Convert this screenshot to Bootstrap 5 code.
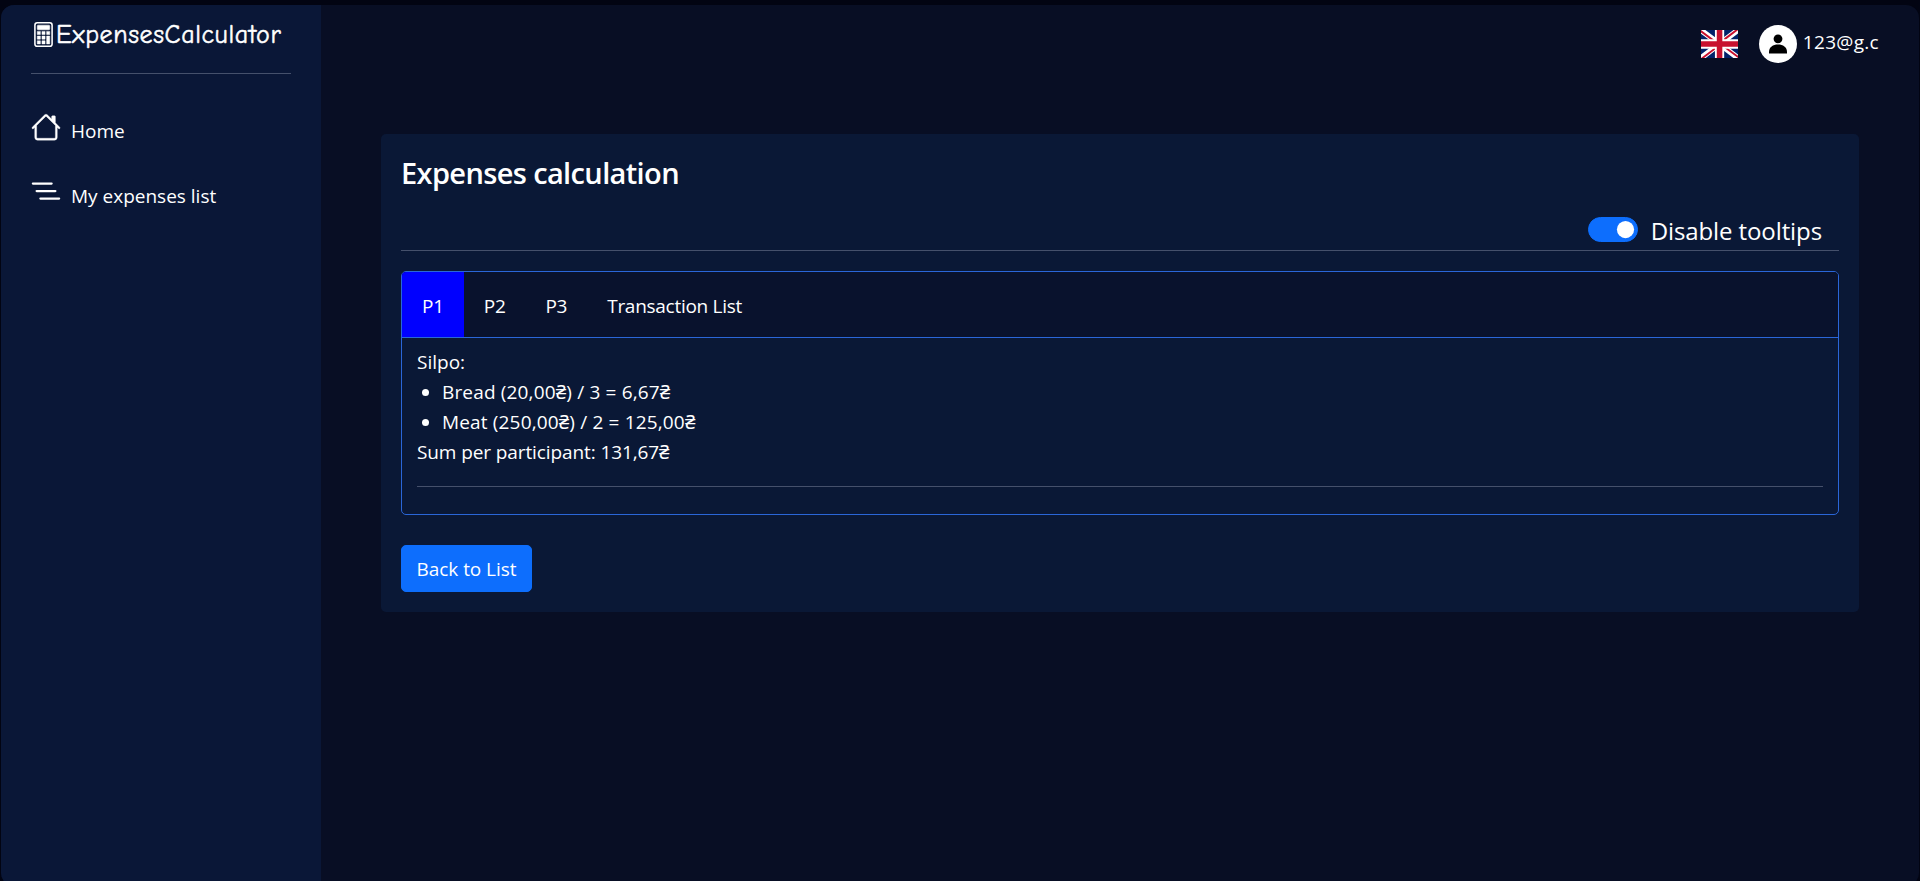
<!DOCTYPE html>
<html lang="en">
<head>
<meta charset="utf-8">
<meta name="viewport" content="width=device-width, initial-scale=1">
<title>ExpensesCalculator</title>
<link href="https://cdn.jsdelivr.net/npm/bootstrap@5.3.0/dist/css/bootstrap.min.css" rel="stylesheet">
<style>
html { font-size: 20px; }
body { background: #020412; color: #fff; font-family: "Open Sans", "Noto Sans", sans-serif; font-size: 19px; line-height: 30px; height: 881px; overflow: hidden; padding: 5px 1px 0; }
.shell { height: 881px; border-radius: 13px; background: #080e24; overflow: hidden; }
.side { width: 320px; background: #0a1737; padding: 9px 30px 0; }
.brand { font-family: "Comic Sans MS", "Comic Neue", Lato, sans-serif; font-size: 26px; letter-spacing: .6px; height: 40px; -webkit-text-stroke: .5px #fff; }
.brand span { padding-top: 2px; }
.rule { margin: 0; height: 1px; border: 0; background: #45506b; opacity: 1; }
.side-rule { margin-top: 19px; }
.side-menu { padding-top: 38px; }
.side-link { height: 65px; gap: 10px; color: #fff; text-decoration: none; }
.side-link span { padding-top: 4px; }
.topbar { height: 58px; padding: 20px 40px 0 0; }
.topbar .flag { margin: 5px 21px 0 0; }
.topbar .account { margin: 2px 0 0 6px; letter-spacing: .3px; }
.panel { background: #0a1836; border-radius: 5px; margin: 71px 60px 0; padding: 20px; height: 478px; }
.title { font-size: 29px; line-height: 38px; height: 40px; font-weight: 600; letter-spacing: -.63px; }
.form-switch { min-height: 0; padding: 23px 17px 0 0; height: 56px; gap: 13px; }
.form-switch .form-check-input { margin: 0; width: 50px; height: 25px; }
.big-label { font-size: 24px; line-height: 28px; letter-spacing: -.1px; }
.tabs-box { border: 1px solid #2a66d8; border-radius: 5px; height: 244px; margin-top: 20px; overflow: hidden; }
.tabs-head { background: #09122d; border-bottom: 1px solid #2a66d8; height: 66px; }
.tabs-head .nav-link { color: #fff; border-radius: 0; padding: 0 20px; height: 65px; line-height: 68px; letter-spacing: -.28px; }
.tabs-head .nav-link.active { background: #00f; }
.tab-text { padding: 9px 15px; }
.tab-text ul { padding-left: 25px; margin: 0; letter-spacing: .16px; }
.tab-text .total { letter-spacing: -.1px; }
.tab-text .rule { margin-top: 19px; }
.back { font-size: 19px; line-height: 34px; height: 47px; width: 131px; padding: 6px 0; margin-top: 30px; border-radius: 5px; letter-spacing: -.05px; }
</style>
</head>
<body>
<div class="shell d-flex">
  <nav class="side flex-shrink-0">
    <div class="brand d-flex align-items-center">
      <svg width="25" height="25" viewBox="0 0 16 16" fill="#fff"><path d="M12 1a1 1 0 0 1 1 1v12a1 1 0 0 1-1 1H4a1 1 0 0 1-1-1V2a1 1 0 0 1 1-1h8zM4 0a2 2 0 0 0-2 2v12a2 2 0 0 0 2 2h8a2 2 0 0 0 2-2V2a2 2 0 0 0-2-2H4z"/><path d="M4 2.500a.5.5 0 0 1 .5-.5h7a.5.5 0 0 1 .5.5v2a.5.5 0 0 1-.5.5h-7a.5.5 0 0 1-.5-.5v-2zM4 6h2v2H4zM4 9h2v2H4zM4 12h2v2H4zM7 6h2v2H7zM7 9h2v2H7zM7 12h2v2H7zM10 6h2v2h-2zM10 9h2v5h-2z" stroke="#fff" stroke-width=".3"/></svg>
      <span>ExpensesCalculator</span>
    </div>
    <hr class="rule side-rule">
    <div class="side-menu">
      <a class="side-link d-flex" href="#">
        <svg width="30" height="30" viewBox="0 0 16 16" fill="#fff" stroke="#fff" stroke-width=".2"><path d="M8.707 1.500a1 1 0 0 0-1.414 0L.646 8.146a.5.5 0 0 0 .708.708L2 8.207V13.500A1.500 1.500 0 0 0 3.500 15h9a1.500 1.500 0 0 0 1.500-1.500V8.207l.646.647a.5.5 0 0 0 .708-.708L13 5.793V2.500a.5.5 0 0 0-.5-.5h-1a.5.5 0 0 0-.5.5v1.293L8.707 1.500ZM13 7.207V13.500a.5.5 0 0 1-.5.5h-9a.5.5 0 0 1-.5-.5V7.207l5-5 5 5Z"/></svg>
        <span>Home</span></a>
      <a class="side-link d-flex" href="#">
        <svg width="30" height="30" viewBox="0 0 16 16" fill="none" stroke="#fff" stroke-width="1.200" stroke-linecap="round"><path d="M1 3.500h10M3 7.500h10M5 11.500h10"/></svg>
        <span>My expenses list</span></a>
    </div>
  </nav>
  <main class="flex-grow-1">
    <header class="topbar d-flex justify-content-end align-items-start">
      <svg class="flag" width="37" height="28" viewBox="0 0 640 480" preserveAspectRatio="none"><path fill="#012169" d="M0 0h640v480H0z"/><path fill="#FFF" d="m75 0 244 181L562 0h78v62L400 241l240 178v61h-80L320 301 81 480H0v-60l239-178L0 64V0h75z"/><path fill="#C8102E" d="m424 281 216 159v40L369 281h55zm-184 20 6 35L54 480H0l240-179zM640 0v3L391 191l2-44L590 0h50zM0 0l239 176h-60L0 42V0z"/><path fill="#FFF" d="M241 0v480h160V0H241zM0 160v160h640V160H0z"/><path fill="#C8102E" d="M0 193v96h640v-96H0zM273 0v480h96V0h-96z"/></svg>
      <svg width="38" height="38" viewBox="0 0 38 38"><circle cx="19" cy="19" r="19" fill="#fff"/><circle cx="19" cy="13.800" r="4.400"/><path d="M10 28.500v-1.500c0-5 4-7.500 9-7.500s9 2.500 9 7.500v1.500z"/></svg>
      <span class="account">123@g.c</span>
    </header>
    <section class="panel">
      <h4 class="title mb-0">Expenses calculation</h4>
      <div class="form-switch d-flex justify-content-end">
        <input class="form-check-input" type="checkbox" role="switch" id="tips" checked>
        <label class="big-label" for="tips">Disable tooltips</label>
      </div>
      <hr class="rule">
      <div class="tabs-box">
        <div class="tabs-head nav flex-nowrap">
          <a class="nav-link active" href="#">P1</a><a class="nav-link" href="#">P2</a><a class="nav-link" href="#">P3</a><a class="nav-link" href="#">Transaction List</a>
        </div>
        <div class="tab-text">
          <div>Silpo:</div>
          <ul><li>Bread (20,00₴) / 3 = 6,67₴</li><li>Meat (250,00₴) / 2 = 125,00₴</li></ul>
          <div class="total">Sum per participant: 131,67₴</div>
          <hr class="rule">
        </div>
      </div>
      <a class="btn btn-primary back" href="#">Back to List</a>
    </section>
  </main>
</div>
<script src="https://cdn.jsdelivr.net/npm/bootstrap@5.3.0/dist/js/bootstrap.bundle.min.js"></script>
</body>
</html>
